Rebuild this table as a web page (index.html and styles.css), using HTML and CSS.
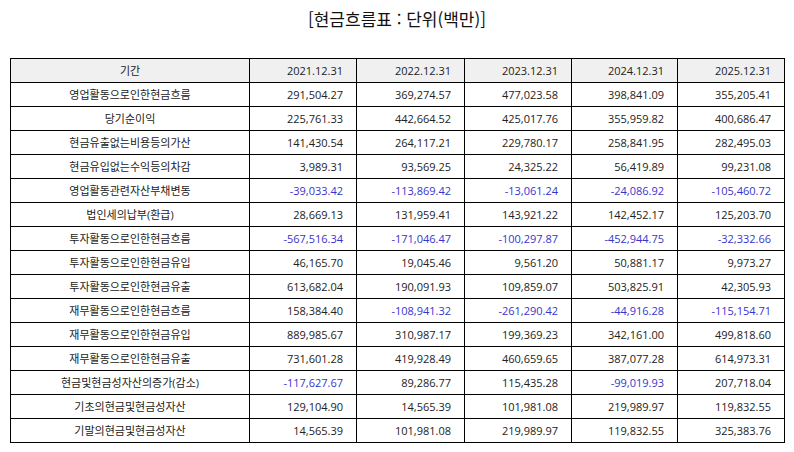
FILE: index.html
```html
<!DOCTYPE html>
<html lang="ko">
<head>
<meta charset="utf-8">
<link rel="stylesheet" href="styles.css">
</head>
<body>
<div class="page">
  <h1 class="title">[현금흐름표 : 단위(백만)]</h1>
  <table class="grid">
    <colgroup>
      <col class="c-label"><col class="c-a"><col class="c-b"><col class="c-a"><col class="c-c"><col class="c-a">
    </colgroup>
    <thead>
      <tr><th class="label">기간</th><th>2021.12.31</th><th>2022.12.31</th><th>2023.12.31</th><th>2024.12.31</th><th>2025.12.31</th></tr>
    </thead>
    <tbody>
      <tr><td class="label">영업활동으로인한현금흐름</td><td>291,504.27</td><td>369,274.57</td><td>477,023.58</td><td>398,841.09</td><td>355,205.41</td></tr>
      <tr><td class="label">당기순이익</td><td>225,761.33</td><td>442,664.52</td><td>425,017.76</td><td>355,959.82</td><td>400,686.47</td></tr>
      <tr><td class="label">현금유출없는비용등의가산</td><td>141,430.54</td><td>264,117.21</td><td>229,780.17</td><td>258,841.95</td><td>282,495.03</td></tr>
      <tr><td class="label">현금유입없는수익등의차감</td><td>3,989.31</td><td>93,569.25</td><td>24,325.22</td><td>56,419.89</td><td>99,231.08</td></tr>
      <tr><td class="label">영업활동관련자산부채변동</td><td class="neg">-39,033.42</td><td class="neg">-113,869.42</td><td class="neg">-13,061.24</td><td class="neg">-24,086.92</td><td class="neg">-105,460.72</td></tr>
      <tr><td class="label">법인세의납부(환급)</td><td>28,669.13</td><td>131,959.41</td><td>143,921.22</td><td>142,452.17</td><td>125,203.70</td></tr>
      <tr><td class="label">투자활동으로인한현금흐름</td><td class="neg">-567,516.34</td><td class="neg">-171,046.47</td><td class="neg">-100,297.87</td><td class="neg">-452,944.75</td><td class="neg">-32,332.66</td></tr>
      <tr><td class="label">투자활동으로인한현금유입</td><td>46,165.70</td><td>19,045.46</td><td>9,561.20</td><td>50,881.17</td><td>9,973.27</td></tr>
      <tr><td class="label">투자활동으로인한현금유출</td><td>613,682.04</td><td>190,091.93</td><td>109,859.07</td><td>503,825.91</td><td>42,305.93</td></tr>
      <tr><td class="label">재무활동으로인한현금흐름</td><td>158,384.40</td><td class="neg">-108,941.32</td><td class="neg">-261,290.42</td><td class="neg">-44,916.28</td><td class="neg">-115,154.71</td></tr>
      <tr><td class="label">재무활동으로인한현금유입</td><td>889,985.67</td><td>310,987.17</td><td>199,369.23</td><td>342,161.00</td><td>499,818.60</td></tr>
      <tr><td class="label">재무활동으로인한현금유출</td><td>731,601.28</td><td>419,928.49</td><td>460,659.65</td><td>387,077.28</td><td>614,973.31</td></tr>
      <tr><td class="label">현금및현금성자산의증가(감소)</td><td class="neg">-117,627.67</td><td>89,286.77</td><td>115,435.28</td><td class="neg">-99,019.93</td><td>207,718.04</td></tr>
      <tr><td class="label">기초의현금및현금성자산</td><td>129,104.90</td><td>14,565.39</td><td>101,981.08</td><td>219,989.97</td><td>119,832.55</td></tr>
      <tr><td class="label">기말의현금및현금성자산</td><td>14,565.39</td><td>101,981.08</td><td>219,989.97</td><td>119,832.55</td><td>325,383.76</td></tr>
    </tbody>
  </table>
</div>
</body>
</html>
```
FILE: styles.css
```css
html, body {
  margin: 0;
  padding: 0;
  background: #ffffff;
}
.page {
  padding: 6px 10px 0 10px;
  font-family: "Open Sans", "Noto Sans CJK KR", sans-serif;
  color: #222222;
}
.title {
  margin: 0 0 26px 0;
  height: 26px;
  line-height: 26px;
  font-size: 17px;
  font-weight: normal;
  text-align: center;
  font-family: "Noto Sans CJK KR", sans-serif;
  color: #111111;
}
.grid {
  width: 775px;
  border-collapse: collapse;
  table-layout: fixed;
  font-size: 11px;
}
.c-label { width: 239px; }
.c-a { width: 107px; }
.c-b { width: 108px; }
.c-c { width: 106px; }
.grid th,
.grid td {
  border: 1px solid #000000;
  height: 23px;
  padding: 0 13px 0 4px;
  text-align: right;
  font-weight: normal;
  white-space: nowrap;
  line-height: 14px;
}
.grid th {
  background: #f0f0f0;
}
.grid .label {
  text-align: center;
  padding: 0 4px;
}
.grid .neg {
  color: #3535cc;
}
```
